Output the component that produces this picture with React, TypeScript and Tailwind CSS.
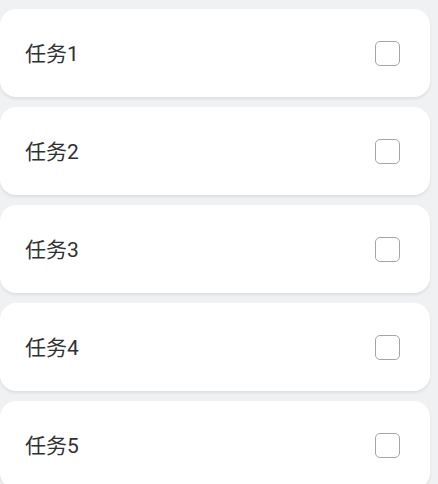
import React from 'react';

const tasks = ['任务1', '任务2', '任务3', '任务4', '任务5'];

export default function App() {
  return (
    <main className="min-h-screen bg-[#f0f1f3] pt-[9px] pr-2" style={{ fontFamily: 'Roboto, "Noto Sans CJK SC", sans-serif' }}>
      <div className="flex flex-col gap-[10px]">
        {tasks.map((t) => (
          <div
            key={t}
            className="flex h-[88px] w-[430px] items-center justify-between rounded-2xl bg-white pl-[25px] pr-[30px] shadow-[0_2px_3px_rgba(0,0,0,0.08)]"
          >
            <span className="mt-[3px] text-[21px] text-[#2f3033]">{t}</span>
            <span className="block h-[25px] w-[25px] rounded-[5px] border-[1.5px] border-[#a3a5a8] bg-white" />
          </div>
        ))}
      </div>
    </main>
  );
}
